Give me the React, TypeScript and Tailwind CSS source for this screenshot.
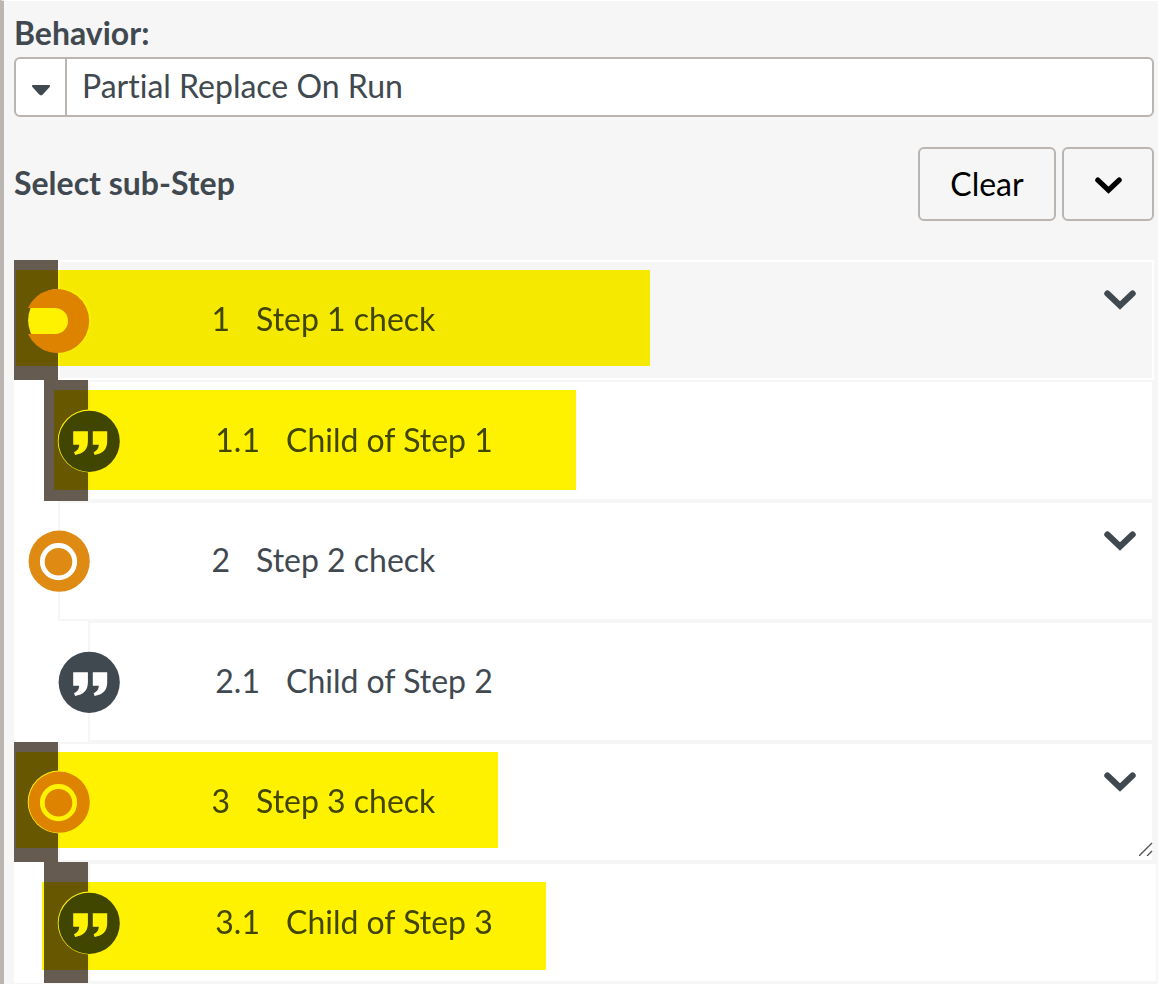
import React from "react";

type Kind = "start" | "process" | "comment";

interface Step {
  id: string;
  number: string;
  title: string;
  kind: Kind;
  child?: boolean;
  active?: boolean;
  selected?: boolean;
  resizable?: boolean;
  row?: string;
  mark?: string;
}

const steps: Step[] = [
  { id: "s1", number: "1", title: "Step 1 check", kind: "start", active: true, selected: true, mark: "left-[2px] top-[10px] h-[96px] w-[634px]" },
  { id: "s11", number: "1.1", title: "Child of Step 1", kind: "comment", child: true, selected: true, mark: "left-[40px] top-[10px] h-[100px] w-[522px]" },
  { id: "s2", number: "2", title: "Step 2 check", kind: "process" },
  { id: "s21", number: "2.1", title: "Child of Step 2", kind: "comment", child: true },
  { id: "s3", number: "3", title: "Step 3 check", kind: "process", selected: true, resizable: true, mark: "left-[2px] top-[10px] h-[96px] w-[482px]" },
  { id: "s31", number: "3.1", title: "Child of Step 3", kind: "comment", child: true, selected: true, row: "-mr-1", mark: "left-[28px] top-[20px] h-[88px] w-[504px]" },
];

function Chevron({ className }: { className: string }) {
  return (
    <svg viewBox="0 0 32 20" className={className} fill="none" stroke="currentColor" strokeWidth="6.2" strokeLinecap="round" aria-hidden="true">
      <path d="M3.4 3.6 16 15.4 28.6 3.6" strokeLinejoin="miter" />
    </svg>
  );
}

function StepIcon({ kind }: { kind: Kind }) {
  return (
    <svg viewBox="0 0 68 68" className="size-[68px]" aria-hidden="true">
      {kind === "start" && (
        <>
          <circle cx="34.7" cy="34.3" r="31.6" fill="#fff" />
          <path d="M3 22A32 32 0 1 1 3 48H30a13 13 0 0 0 0-26Z" fill="#de8a13" />
        </>
      )}
      {kind === "process" && (
        <>
          <circle cx="34.2" cy="34" r="31.5" fill="#fff" />
          <circle cx="34.2" cy="34.2" r="30.6" fill="#de8a13" />
          <circle cx="33.5" cy="34.7" r="16.2" fill="none" stroke="#fff" strokeWidth="4.8" />
        </>
      )}
      {kind === "comment" && (
        <>
          <circle cx="34.2" cy="34" r="31.5" fill="#fff" />
          <circle cx="34.2" cy="34.3" r="30.6" fill="#404850" />
          <path d="M18.2 24.2h14.7v10.4c0 7.8-4.700 12.600-12.800 13.300l-1.100-2.800c2.900-1.100 5.200-3.600 5.200-7.400h-6zM37.800 24.200h14.400v10.400c0 7.800-4.600 12.600-12.600 13.300l-1-2.800c2.900-1.100 5.200-3.600 5.200-7.400h-6z" fill="#fff" />
        </>
      )}
    </svg>
  );
}

function StepRow({ step }: { step: Step }) {
  const offset = step.child ? "h-[121px] pl-[30px]" : "h-[120px]";
  const surface = step.active ? "border-white bg-[#f6f6f6]" : "border-[#f6f6f6] bg-white";
  return (
    <li className={`relative isolate flex ${offset} ${step.row ?? ""}`}>
      <div className={`relative w-11 shrink-0 ${step.selected ? "bg-[#665b50]" : "bg-white"}`}>
        <div className="absolute top-1/2 left-[11px] z-10 -mt-[34px]">
          <StepIcon kind={step.kind} />
        </div>
      </div>
      <div className={`flex min-w-0 flex-1 items-center border-2 ${surface}`}>
        <span className="w-[170px] shrink-0 pb-0.5 text-right">{step.number}</span>
        <span className="min-w-0 flex-1 truncate pb-0.5 pl-[26px]">{step.title}</span>
        {!step.child && (
          <button type="button" aria-label={`Expand ${step.title}`} className="mt-7 mr-4 self-start">
            <Chevron className="block h-5 w-8" />
          </button>
        )}
      </div>
      {step.mark && <div className={`pointer-events-none absolute z-20 bg-[#fff200] mix-blend-multiply ${step.mark}`} />}
      {step.resizable && (
        <svg viewBox="0 0 14 14" className="absolute right-px bottom-1.5 size-3.5 text-[#555]" fill="none" stroke="currentColor" strokeWidth="1.4" aria-hidden="true">
          <path d="M0 14 13 1M8 14l5-5" />
        </svg>
      )}
    </li>
  );
}

export default function App() {
  return (
    <main className="min-h-screen border-t border-l-4 border-t-white border-l-[#bab5b0] bg-[#f6f6f6] pr-1 pl-2.5 font-['Lato',sans-serif] text-[32px] leading-10 text-[#404850] [font-variant-ligatures:none]">
      <label htmlFor="behavior" className="block pt-3 font-bold">
        Behavior:
      </label>
      <div className="relative mt-1 h-[60px] rounded-md border-2 border-[#bab5b0] bg-white">
        <select id="behavior" className="block size-full appearance-none rounded-md bg-transparent pb-0.5 pl-[66px]" defaultValue="partial">
          <option value="partial">Partial Replace On Run</option>
        </select>
        <div className="pointer-events-none absolute inset-y-0 left-0 flex w-[51px] items-center justify-center border-r-2 border-[#bab5b0] pt-1.5">
          <svg viewBox="0 0 18 11" className="h-[11px] w-[18px]" fill="currentColor" aria-hidden="true">
            <path d="M1.2 0h15.600c1.100 0 1.600 1.200.8 2l-6.800 7.600c-1 1.100-2.600 1.100-3.600 0L.4 2C-.4 1.200.1 0 1.200 0Z" />
          </svg>
        </div>
      </div>
      <div className="mt-[30px] flex items-center gap-1.5">
        <h2 className="flex-1 pb-0.5 font-bold">Select sub-Step</h2>
        <button type="button" className="h-[74px] w-[138px] rounded-md border-2 border-[#bab5b0] text-black">
          Clear
        </button>
        <button type="button" aria-label="Expand all" className="flex h-[74px] w-[92px] items-center justify-center rounded-md border-2 border-[#bab5b0] pt-0.5 text-black">
          <Chevron className="h-[17px] w-[27px]" />
        </button>
      </div>
      <ul className="mt-[39px] bg-white">
        {steps.map((step) => (
          <StepRow key={step.id} step={step} />
        ))}
      </ul>
    </main>
  );
}
